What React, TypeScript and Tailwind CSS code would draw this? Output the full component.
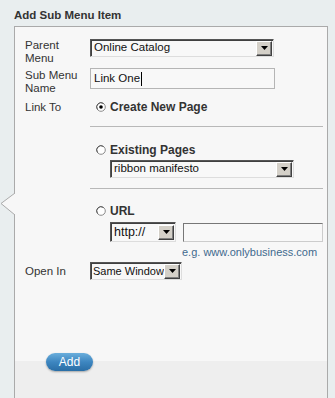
import React from "react";

const font = { fontFamily: '"Liberation Sans", Arial, sans-serif' };

function Arrow() {
  return (
    <span className="flex h-[15px] w-[16px] shrink-0 items-center justify-center border border-t-[#fff] border-l-[#fff] border-r-[#404040] border-b-[#404040] bg-[#d4d0c8] shadow-[inset_-1px_-1px_0_#808080]">
      <svg width="7" height="4" viewBox="0 0 7 4">
        <path d="M0 0H7L3.5 4Z" fill="#000" />
      </svg>
    </span>
  );
}

function Select({ text, w }: { text: string; w: string }) {
  return (
    <div className={`flex h-[18px] items-center justify-between border border-t-[#555] border-l-[#555] border-r-[#ddd] border-b-[#ddd] bg-[#f8f8f8] pl-[3px] pr-px shadow-[inset_1px_1px_0_#404040] ${w}`}>
      <span className="whitespace-nowrap text-[11.5px] leading-none text-[#111]">{text}</span>
      <Arrow />
    </div>
  );
}

function Radio({ checked }: { checked?: boolean }) {
  return (
    <svg width="10" height="10" viewBox="0 0 10 10" className="shrink-0">
      <circle cx="5" cy="5" r="4.3" fill="#fff" stroke="#8a8a8a" strokeWidth="1" />
      <path d="M1.5 7.5A4.3 4.3 0 0 1 7.5 1.5" fill="none" stroke="#555" strokeWidth="1" />
      {checked && <circle cx="5" cy="5" r="1.8" fill="#000" />}
    </svg>
  );
}

export default function App() {
  return (
    <div className="h-[398px] w-[335px] overflow-hidden bg-[#e9eeef] text-[#333]" style={font}>
      <div className="pl-[14px] pt-[8px] text-[11.5px] font-bold leading-[14px] text-[#333]">Add Sub Menu Item</div>
      <div className="relative ml-[14px] mt-[4px] w-[314px] border-l border-r border-t border-[#aaa] bg-[#f7f7f7]">
        <svg className="absolute left-[-15px] top-[166px]" width="16" height="24" viewBox="0 0 16 24">
          <path d="M15 0L1 10.5L15 22Z" fill="#f7f7f7" />
          <path d="M15 0L1 10.5L15 22" fill="none" stroke="#aaa" strokeWidth="1" />
        </svg>
        <div className="h-[334px] pl-[10px] pt-[12px]">
          <div className="flex">
            <div className="w-[65px] text-[11.5px] leading-[13px]">Parent Menu</div>
            <Select text="Online Catalog" w="w-[184px]" />
          </div>
          <div className="mt-[3px] flex">
            <div className="mt-[1px] w-[65px] text-[11.5px] leading-[13px]">Sub Menu Name</div>
            <div className="flex h-[21px] w-[185px] items-center border border-[#b5b5b5] bg-[#f8f8f8] pl-[3px]">
              <span className="whitespace-nowrap text-[11.5px] leading-none text-[#111]">Link One</span>
              <span className="ml-px h-[14px] w-px bg-[#000]" />
            </div>
          </div>
          <div className="mt-[5px] flex">
            <div className="w-[65px] text-[11.5px] leading-[14px]">Link To</div>
            <div className="flex-1">
              <div className="flex items-center gap-[4px] pl-[6px]">
                <Radio checked />
                <span className="text-[12px] font-bold leading-[14px]">Create New Page</span>
              </div>
              <div className="mt-[12px] mr-[4px] h-px bg-[#b8b8b8]" />
              <div className="mt-[16px] flex items-center gap-[4px] pl-[6px]">
                <Radio />
                <span className="text-[12px] font-bold leading-[14px]">Existing Pages</span>
              </div>
              <div className="mt-[3px] pl-[20px]">
                <Select text="ribbon manifesto" w="w-[184px]" />
              </div>
              <div className="mt-[10px] mr-[4px] h-px bg-[#b8b8b8]" />
              <div className="mt-[15px] flex items-center gap-[4px] pl-[6px]">
                <Radio />
                <span className="text-[12px] font-bold leading-[14px]">URL</span>
              </div>
              <div className="mt-[4px] flex items-start gap-[7px] pl-[20px]">
                <div className="flex h-[20px] w-[66px] items-center justify-between border border-t-[#555] border-l-[#555] border-r-[#ddd] border-b-[#ddd] bg-[#f8f8f8] pl-[3px] pr-px shadow-[inset_1px_1px_0_#404040]">
                  <span className="whitespace-nowrap text-[12.5px] leading-none text-[#111]">http://</span>
                  <Arrow />
                </div>
                <div className="mt-px h-[19px] w-[140px] border border-t-[#777] border-l-[#777] border-r-[#ccc] border-b-[#ccc] bg-[#f8f8f8]" />
              </div>
              <div className="mt-[3px] whitespace-nowrap pl-[92px] text-[11px] leading-[14px] text-[#3f6a8e]">e.g. www.onlybusiness.com</div>
            </div>
          </div>
          <div className="mt-[3px] flex items-center">
            <div className="w-[65px] text-[11.5px] leading-[14px]">Open In</div>
            <div className="flex h-[18px] w-[92px] items-center justify-between border border-t-[#555] border-l-[#555] border-r-[#ddd] border-b-[#ddd] bg-[#f8f8f8] pl-[2px] pr-px shadow-[inset_1px_1px_0_#404040]">
              <span className="whitespace-nowrap text-[11px] leading-none text-[#111]">Same Window</span>
              <Arrow />
            </div>
          </div>
        </div>
        <div className="h-[40px] bg-[#eeeeee]">
          <div className="relative -top-[8px] ml-[31px] flex h-[18px] w-[47px] items-center justify-center rounded-full bg-gradient-to-b from-[#6aaedc] via-[#3d86c0] to-[#2a6ea6] text-[12px] leading-none text-white shadow-[0_1px_2px_rgba(0,0,0,0.3)]">
            Add
          </div>
        </div>
      </div>
    </div>
  );
}
